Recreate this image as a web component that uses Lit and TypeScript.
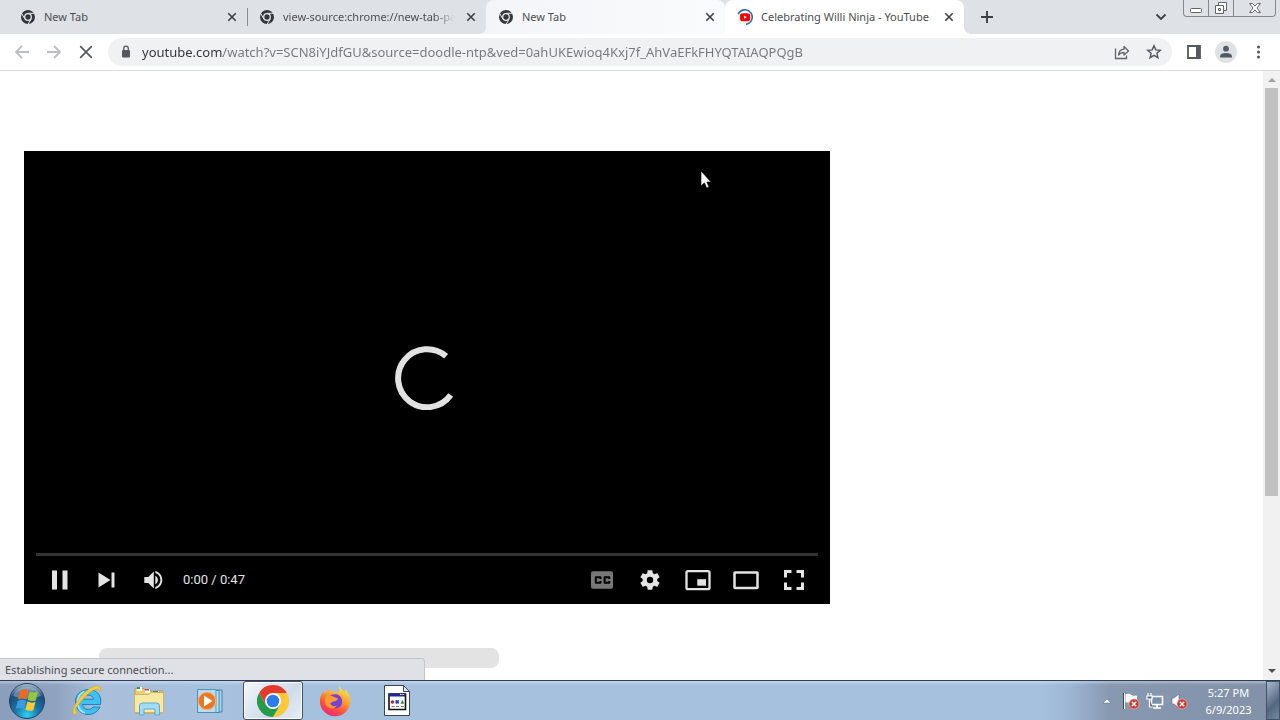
import { LitElement, html, css, svg } from "lit";
import { customElement, property } from "lit/decorators.js";
import { classMap } from "lit/directives/class-map.js";

const chromeMono = html`<svg width="16" height="16" viewBox="0 0 16 16" aria-hidden="true">
  <circle cx="8" cy="8" r="7" fill="#33373b" />
  <path d="M8 4.300h6.600M4.800 9.900L1.500 4.200M11.200 9.900L7.900 15.600" stroke="#e8eaed" stroke-width="1" />
  <circle cx="8" cy="8" r="3.300" fill="#33373b" stroke="#e8eaed" stroke-width="1.300" />
</svg>`;

const youtubeLoading = html`<svg width="16" height="16" viewBox="0 0 16 16" aria-hidden="true">
  <path d="M1.200 5.200A7.300 7.300 0 1 1 9 15.300" fill="none" stroke="#3367b4" stroke-width="1.600" />
  <rect x="3" y="4.200" width="10.200" height="8" rx="2.800" fill="#f00" />
  <path d="M7 6.600v3.200L9.800 8.200z" fill="#fff" />
</svg>`;

const crossIcon = html`<svg width="16" height="16" viewBox="0 0 16 16" aria-hidden="true">
  <path d="M4.300 4.300l7.400 7.400M11.700 4.300l-7.400 7.400" stroke="#3c4043" stroke-width="1.600" />
</svg>`;

@customElement("browser-tab")
class BrowserTab extends LitElement {
  @property() label = "";
  @property() kind = "plain";
  @property() icon = "chrome";

  static styles = css`
    :host {
      display: block;
      flex: 0 1 239px;
      min-width: 0;
    }
    .tab {
      position: relative;
      display: flex;
      align-items: center;
      gap: 8px;
      box-sizing: border-box;
      height: 34px;
      padding: 0 7px 0 12px;
      border-radius: 8px 8px 0 0;
      color: #4b4e52;
    }
    .near {
      background: linear-gradient(90deg, #f3f5f8, #fafbfc);
    }
    .active {
      background: #fff;
    }
    .near::before,
    .active::after {
      content: "";
      position: absolute;
      bottom: 0;
      width: 8px;
      height: 8px;
    }
    .near::before {
      right: 100%;
      background: radial-gradient(circle at 0 0, transparent 8px, #f3f5f8 8px);
    }
    .active::after {
      left: 100%;
      background: radial-gradient(circle at 100% 0, transparent 8px, #fff 8px);
    }
    .divided {
      border-radius: 0;
      background: linear-gradient(#8a8d91, #8a8d91) 0 50% / 1px 18px no-repeat;
    }
    .icon {
      flex: none;
      display: flex;
    }
    .label {
      flex: 1;
      min-width: 0;
      overflow: hidden;
      white-space: nowrap;
      font: 11px/16px "Noto Sans", "Open Sans", sans-serif;
    }
    .divided .label {
      -webkit-mask-image: linear-gradient(90deg, #000 calc(100% - 20px), transparent);
      mask-image: linear-gradient(90deg, #000 calc(100% - 20px), transparent);
    }
    button {
      flex: none;
      display: flex;
      padding: 0;
      border: 0;
      background: none;
    }
  `;

  render() {
    return html`<div class=${classMap({ tab: true, [this.kind]: true })}>
      <span class="icon">${this.icon === "youtube" ? youtubeLoading : chromeMono}</span>
      <span class="label">${this.label}</span>
      <button aria-label="Close tab">${crossIcon}</button>
    </div>`;
  }
}

@customElement("video-player")
class VideoPlayer extends LitElement {
  static styles = css`
    :host {
      display: block;
    }
    .player {
      display: grid;
      grid-template-rows: 1fr auto auto;
      box-sizing: border-box;
      aspect-ratio: 16 / 9;
      padding: 0 12px;
      background: #000;
      color: #e4e4e4;
    }
    .stage {
      display: grid;
      place-items: center;
      padding-top: 52px;
    }
    .progress {
      height: 3px;
      background: #343434;
    }
    .controls {
      display: flex;
      align-items: center;
      height: 48px;
    }
    button {
      display: grid;
      place-items: center;
      width: 48px;
      height: 48px;
      padding: 0;
      border: 0;
      background: none;
      color: inherit;
    }
    .left button {
      width: 47px;
    }
    .left,
    .right {
      display: flex;
      align-items: center;
    }
    .right {
      margin-left: auto;
    }
    .time {
      padding-left: 6px;
      font: 13px/16px Roboto, sans-serif;
    }
  `;

  private button(label: string, shape: unknown) {
    return html`<button aria-label=${label}>
      <svg width="36" height="36" viewBox="0 0 36 36" fill="currentColor" aria-hidden="true">${shape}</svg>
    </button>`;
  }

  render() {
    return html`<div class="player">
      <div class="stage">
        <svg width="64" height="64" viewBox="0 0 64 64" role="img" aria-label="Loading">
          <path d="M51.1 10.3A29 29 0 1 0 55.7 49.1" fill="none" stroke="#e2e2e2" stroke-width="6" />
        </svg>
      </div>
      <div class="progress"></div>
      <div class="controls">
        <div class="left">
          ${this.button("Pause", svg`<path d="M10 8.500h5v19h-5zM20.500 8.500h5v19h-5z" />`)}
          ${this.button("Next", svg`<path d="M9.500 10.400v15.200L21.500 18zM22.500 10.400h3v15.200h-3z" />`)}
          ${this.button("Mute", svg`<path d="M8.300 15v6h4l5.500 5.500v-17L12.300 15z" />
            <path d="M19.300 13.700v8.600c1.600-.8 2.600-2.400 2.600-4.300s-1-3.500-2.600-4.300z" />
            <path d="M19.300 9v2.100c3 .9 5.100 3.700 5.100 6.900s-2.100 6-5.100 6.900V27c4.100-1 7-4.600 7-9s-2.900-8-7-9z" />`)}
          <span class="time">0:00 / 0:47</span>
        </div>
        <div class="right">
          ${this.button("Subtitles", svg`<rect x="7" y="9.200" width="22" height="17.600" rx="2" fill="#787878" />
            <path d="M16.500 17v-1.700h-4.700v5.400h4.700V19M25.300 17v-1.700h-4.700v5.400h4.700V19" fill="none" stroke="#000" stroke-width="2" stroke-linejoin="round" />`)}
          ${this.button("Settings", svg`<path fill-rule="evenodd" d="M23.940 18.780c.03-.25.050-.51.050-.78s-.02-.52-.050-.78l1.680-1.320c.15-.12.190-.33.090-.51l-1.600-2.760c-.09-.17-.31-.24-.48-.17l-1.990.8c-.41-.32-.86-.58-1.350-.78l-.3-2.120c-.02-.19-.19-.33-.39-.33h-3.200c-.2 0-.36.140-.39.330l-.3 2.120c-.48.200-.93.470-1.350.780l-1.990-.8c-.18-.07-.39 0-.49.170l-1.600 2.760c-.1.170-.05.390.09.510l1.680 1.320c-.03.250-.050.520-.050.780s.02.520.050.780l-1.680 1.320c-.15.120-.19.330-.09.510l1.600 2.760c.09.170.31.240.48.170l1.990-.8c.41.320.86.580 1.350.780l.3 2.120c.02.190.19.330.39.330h3.200c.2 0 .36-.14.390-.33l.3-2.120c.48-.2.930-.47 1.350-.78l1.990.8c.18.070.39 0 .48-.17l1.600-2.760c.09-.17.050-.39-.09-.51zM18 20.600a2.600 2.600 0 1 1 0-5.200 2.600 2.600 0 0 1 0 5.200z" transform="translate(-3.960 -3.960) scale(1.220)" />`)}
          ${this.button("Miniplayer", svg`<rect x="6.500" y="9.200" width="23" height="18" rx="1.500" fill="none" stroke="currentColor" stroke-width="2.300" />
            <path d="M17.300 17.200h8.700v6.500h-8.700z" />`)}
          ${this.button("Theater mode", svg`<rect x="6.500" y="10.500" width="23" height="15.500" rx=".5" fill="none" stroke="currentColor" stroke-width="2.500" />`)}
          ${this.button("Full screen", svg`<path d="M9.500 15.500V9.500h6M20.500 9.500h6v6M26.500 20.500v6h-6M15.500 26.500h-6v-6" fill="none" stroke="currentColor" stroke-width="3" />`)}
        </div>
      </div>
    </div>`;
  }
}

@customElement("task-bar")
class TaskBar extends LitElement {
  static styles = css`
    :host {
      display: block;
    }
    .bar {
      display: flex;
      align-items: stretch;
      height: 39px;
      border-top: 1px solid #2c3d5c;
      background:
        linear-gradient(rgba(255, 255, 255, 0.35), rgba(255, 255, 255, 0) 4px),
        linear-gradient(90deg, #8b9ebb 0, #8fa3c0 56px, #a9bfdc 100px, #a6c1de 250px, rgba(166, 193, 222, 0) 340px),
        linear-gradient(270deg, #8291a8 0, #8798b1 170px, #9db6d4 210px, #a6c1de 240px);
    }
    button {
      display: grid;
      place-items: center;
      box-sizing: border-box;
      padding: 0;
      border: 0;
      background: none;
      color: #fff;
      font: 11px/17px "Noto Sans", "Open Sans", sans-serif;
    }
    .start {
      width: 54px;
    }
    .apps {
      display: flex;
      gap: 2px;
      padding-left: 3px;
    }
    .apps button {
      width: 60px;
    }
    .apps .open {
      border: 1px solid #42516b;
      border-radius: 3px;
      background: linear-gradient(135deg, #f4f7fb, #cfdbea 60%, #e6eef6);
      box-shadow: inset 0 0 0 1px #fff;
    }
    .tray {
      display: flex;
      align-items: center;
      margin-left: auto;
    }
    .tray button {
      width: 24px;
      height: 39px;
    }
    .tray .clock {
      width: 75px;
      align-content: center;
    }
    .tray .desktop {
      width: 14px;
      border: 1px solid #41516b;
      background: linear-gradient(135deg, #a9b9cd, #53677f 60%, #74879d);
    }
  `;

  render() {
    return html`<footer class="bar">
      <button class="start" aria-label="Start">
        <svg width="38" height="38" viewBox="0 0 38 38">
          <defs>
            <radialGradient id="orb" cx=".5" cy=".9" r=".9">
              <stop offset="0" stop-color="#2fd0ef" /><stop offset=".4" stop-color="#1873a8" />
              <stop offset=".75" stop-color="#1d4c77" /><stop offset="1" stop-color="#b3c8d8" />
            </radialGradient>
          </defs>
          <circle cx="19" cy="19" r="17.500" fill="url(#orb)" stroke="#24405f" />
          <path d="M5 14a15 15 0 0 1 28 0q-14 5-28 0z" fill="#fff" opacity=".3" />
          <path d="M12.500 8.500q4.500-2.500 8 0l-2 9q-4-2.300-8.500.3z" fill="#ee6a24" />
          <path d="M21.700 9.200q4 2.300 8.300.2l-2.200 9q-4.300 1.600-8-.6z" fill="#93c83d" />
          <path d="M9.700 19.200q4.300-2.500 8.500-.3l-2.200 8.300q-4-2.200-8.300-.2z" fill="#3b9ae0" />
          <path d="M19.500 19.500q3.700 2 8 .5l-2.200 8.200q-4 1.600-8-.6z" fill="#fccb2b" />
        </svg>
      </button>
      <nav class="apps">
        <button aria-label="Internet Explorer">
          <svg width="32" height="34" viewBox="0 0 32 34">
            <path d="M29.500 20.500H11.500c.5 5.500 8 6.500 10.500 2.500h7C24 34.500 5 32.500 4.500 18S26 1 29.500 14c.4 1.700.3 4.500 0 6.500zM11.500 15.200h11c-.5-5.500-10.200-5.500-11 0z" fill="#3fc0ee" stroke="#1b83bd" />
            <path d="M13 7.500Q7.500 10 6.500 17M7 21q1 6 7 8" fill="none" stroke="#a8e7fb" stroke-width="1.700" />
            <path d="M2.500 30.500C-1 23.500 14 4 25 2c5-.4 5.500 3 4 6-.500-6.500-9.500-1.500-16 6S2 26 6 28.500c-1 1.400-2 2-3.500 2z" fill="#f7cc3a" stroke="#d9a01a" stroke-width=".5" />
          </svg>
        </button>
        <button aria-label="File Explorer">
          <svg width="34" height="34" viewBox="0 0 34 34">
            <path d="M3 4.500h9l2 2.500h17v22H3z" fill="#e9cf76" stroke="#ba9c48" />
            <path d="M5 3h5v4H5zM13 5h5v4h-5zM21 7h6v3h-6z" fill="#fff" />
            <path d="M5 3h3v2H5z" fill="#30a14a" /><path d="M13 5h4v1.500h-4z" fill="#d44734" /><path d="M21 7h5v1.500h-5z" fill="#3789cc" />
            <path d="M2.500 10.500H17l2-2h12.500v20h-29z" fill="#f8e9a1" stroke="#cfb561" />
            <path d="M7.500 31V22q0-3 3-3h14q3 0 3 3v9H23v-6H12v6z" fill="#9fdcf6" stroke="#5fa8d2" />
          </svg>
        </button>
        <button aria-label="Media Player">
          <svg width="32" height="32" viewBox="0 0 32 32">
            <path d="M12 5h15v22H12z" fill="#a7d4eb" stroke="#4285ac" />
            <path d="M8 5.500h16v22H8z" fill="#c3e4f3" stroke="#4285ac" />
            <path d="M2.500 4.500h18.500v23H2.500z" fill="#b8dcef" stroke="#4f91b5" />
            <circle cx="12" cy="16" r="8.700" fill="#ed7621" stroke="#f8b17b" />
            <path d="M9 10.500v11l8.500-5.500z" fill="#fff" />
          </svg>
        </button>
        <button class="open" aria-label="Google Chrome">
          <svg width="32" height="32" viewBox="0 0 32 32">
            <path d="M16 16V8h13.860A16 16 0 0 1 16 32l7-12z" fill="#fcc934" />
            <path d="M16 16l7 4-7 12A16 16 0 0 1 2.140 8L9 20z" fill="#259b4b" />
            <path d="M2.140 8L9 20l7-4V8h13.860A16 16 0 0 0 2.140 8z" fill="#e33b2e" />
            <circle cx="16" cy="16" r="8" fill="#fff" /><circle cx="16" cy="16" r="6.300" fill="#2b7de9" />
          </svg>
        </button>
        <button aria-label="Firefox">
          <svg width="32" height="34" viewBox="0 0 32 34">
            <defs>
              <linearGradient id="fox" x1=".8" y1="0" x2=".3" y2="1">
                <stop offset="0" stop-color="#fff14a" /><stop offset=".4" stop-color="#ffa22d" />
                <stop offset=".75" stop-color="#ff4a40" /><stop offset="1" stop-color="#e8277e" />
              </linearGradient>
            </defs>
            <path d="M20 1.500c1 3 3 3.500 5 6.500 2-1 1-3 1-3 4 4 6 9 5 15a15.200 15.200 0 0 1-30-1c-.3-5 1-9 3.500-12L6 10l4-6 2 4q4-.8 7 1c2-2 1-5 1-7.500z" fill="url(#fox)" />
            <path d="M10 12.500c4-4 12-3 13 3.500s-4 9-8 8-6-4-5-6l5-1c0-2-2-2.500-5-4.500z" fill="#7542d7" />
            <path d="M7 12q4-2 8 1l4 1.500q-1 3-5 3l-3 2q2 4 7 2-4 5-9 1.500T7 12z" fill="#ff9a2e" />
          </svg>
        </button>
        <button aria-label="Program">
          <svg width="28" height="34" viewBox="0 0 28 34">
            <path d="M1.500 1.500h19l6 6v24h-25z" fill="#fff" stroke="#3b4656" />
            <path d="M20.500 1.500v6h6z" fill="#dbe7f5" stroke="#3b4656" />
            <path d="M6 10h16.500v15.500H6z" fill="#fff" stroke="#111" stroke-width="1.600" />
            <path d="M6 9.500h16.500v3H6z" fill="#1f2a94" /><path d="M17 10.500h1.500M19.500 10.500h1.500" stroke="#fff" />
            <circle cx="9.500" cy="18" r="1.800" fill="#a33030" /><path d="M12.700 16.300l3 3M15.700 16.300l-3 3" stroke="#2a3cc4" stroke-width="1.700" /><path d="M19.300 15.800l1.800 4h-3.600z" fill="#23845b" />
            <path d="M8.500 22.500h3M13 22.500h3M18 22.500h3" stroke="#777" />
          </svg>
        </button>
      </nav>
      <div class="tray">
        <button aria-label="Show hidden icons"><svg width="10" height="6" viewBox="0 0 10 6"><path d="M1 5l4-4 4 4z" fill="#fff" stroke="#5a6a80" stroke-width=".5" /></svg></button>
        <button aria-label="Action center">
          <svg width="18" height="18" viewBox="0 0 18 18"><path d="M2.500 1v16M4 2.500q3-1 5 .8t5.500.7v6H4z" fill="#fff" stroke="#fff" /><path d="M1.500 1v16" stroke="#3b4759" />
            <circle cx="12" cy="12" r="5" fill="#d2352f" stroke="#f0b0ac" stroke-width=".7" /><path d="M9.800 9.800l4.400 4.400M14.200 9.800l-4.400 4.400" stroke="#fff" stroke-width="1.500" /></svg>
        </button>
        <button aria-label="Network">
          <svg width="18" height="18" viewBox="0 0 18 18"><path d="M5.500 4.500h11v8h-11z" fill="#7990aa" stroke="#fff" stroke-width="1.500" /><path d="M11 13v3M7 16h8" stroke="#fff" stroke-width="1.700" /><path d="M2 1v3M5 1v3M1 4h5v3H1zM3.500 7v8h3" fill="#526277" stroke="#fff" stroke-width="1.200" /></svg>
        </button>
        <button aria-label="Volume muted">
          <svg width="18" height="18" viewBox="0 0 18 18"><path d="M2 6h2l5-4v14l-5-4H2z" fill="#fff" stroke="#5a6778" stroke-width=".6" />
            <circle cx="12" cy="12" r="5" fill="#d2352f" stroke="#f0b0ac" stroke-width=".7" /><path d="M9.800 9.800l4.400 4.400M14.200 9.800l-4.400 4.400" stroke="#fff" stroke-width="1.500" /></svg>
        </button>
        <button class="clock"><span>5:27 PM</span><span>6/9/2023</span></button>
        <button class="desktop" aria-label="Show desktop"></button>
      </div>
    </footer>`;
  }
}

@customElement("app-root")
class AppRoot extends LitElement {
  static styles = css`
    :host {
      display: flex;
      flex-direction: column;
      position: relative;
      height: 100vh;
      overflow: hidden;
      background: #fff;
      font: 11px/16px "Noto Sans", "Open Sans", sans-serif;
    }
    button {
      flex: none;
      display: grid;
      place-items: center;
      padding: 0;
      border: 0;
      background: none;
    }
    .strip {
      display: flex;
      flex: none;
      height: 34px;
      padding: 0 4px 0 8px;
      background: #dee1e6;
    }
    .tabs {
      display: flex;
      flex: 0 1 956px;
      min-width: 0;
    }
    .add {
      width: 46px;
    }
    .search {
      width: 44px;
      margin-left: auto;
    }
    .window {
      display: flex;
      height: 17px;
      box-sizing: border-box;
      border: 1px solid #85898f;
      border-top: 0;
      border-radius: 0 0 4px 4px;
    }
    .window button {
      width: 25px;
      border-right: 1px solid #85898f;
    }
    .window .quit {
      width: 41px;
      border: 0;
    }
    .toolbar {
      display: flex;
      align-items: center;
      flex: none;
      height: 36px;
      padding: 0 6px;
      border-bottom: 1px solid #dadcdf;
    }
    .toolbar button {
      width: 32px;
      height: 32px;
    }
    .omnibox {
      display: flex;
      align-items: center;
      flex: 1;
      min-width: 0;
      height: 28px;
      margin: 0 6px;
      padding: 0 2px 0 10px;
      border-radius: 14px;
      background: #f0f1f3;
    }
    .omnibox svg {
      flex: none;
    }
    .address {
      flex: 1;
      min-width: 0;
      margin: 0 0 0 8px;
      padding: 0;
      border: 0;
      outline: 0;
      font: 13px/20px "Noto Sans", "Open Sans", sans-serif;
      color: #6b6f74;
      background: linear-gradient(90deg, #303336 81px, #74777b 81px);
      -webkit-background-clip: text;
      background-clip: text;
      -webkit-text-fill-color: transparent;
    }
    .viewport {
      display: flex;
      flex: 1;
      min-height: 0;
    }
    .page {
      display: grid;
      grid-template-columns: minmax(0, 1fr) 409px;
      column-gap: 24px;
      align-content: start;
      flex: 1;
      min-width: 0;
      padding: 80px 0 0 24px;
      overflow: hidden;
    }
    .skeleton {
      width: 400px;
      height: 20px;
      margin: 44px 0 0 75px;
      border-radius: 8px;
      background: #e3e3e3;
    }
    .scroll {
      display: grid;
      grid-template-rows: 17px 1fr 17px;
      justify-items: stretch;
      width: 17px;
      background: #f1f1f1;
    }
    .track {
      padding: 0 2px;
    }
    .thumb {
      height: 71%;
      background: #c1c1c1;
    }
    .status {
      position: absolute;
      left: 0;
      bottom: 40px;
      box-sizing: border-box;
      width: 425px;
      height: 22px;
      padding: 3px 5px;
      border: solid #c3c5c9;
      border-width: 1px 1px 0 0;
      border-radius: 0 4px 0 0;
      background: #dfe1e6;
      color: #4b4e52;
    }
    .cursor {
      position: absolute;
      left: 700px;
      top: 170px;
    }
  `;

  render() {
    return html`
      <header class="strip">
        <div class="tabs">
          <browser-tab label="New Tab"></browser-tab>
          <browser-tab label="view-source:chrome://new-tab-page" kind="divided"></browser-tab>
          <browser-tab label="New Tab" kind="near"></browser-tab>
          <browser-tab label="Celebrating Willi Ninja - YouTube" kind="active" icon="youtube"></browser-tab>
        </div>
        <button class="add" aria-label="New tab">
          <svg width="14" height="14" viewBox="0 0 14 14"><path d="M7 1v12M1 7h12" stroke="#3c4043" stroke-width="1.900" /></svg>
        </button>
        <button class="search" aria-label="Search tabs">
          <svg width="12" height="8" viewBox="0 0 12 8"><path d="M1.500 1.500L6 6l4.500-4.500" fill="none" stroke="#3c4043" stroke-width="1.800" /></svg>
        </button>
        <div class="window">
          <button aria-label="Minimize"><svg width="14" height="16" viewBox="0 0 14 16"><rect x="1.500" y="8.500" width="11" height="4" rx="1" fill="#fff" stroke="#60646b" /></svg></button>
          <button aria-label="Restore"><svg width="14" height="16" viewBox="0 0 14 16"><path d="M4.500 2.500h8v8h-8z" fill="#fff" stroke="#60646b" /><path d="M1.500 5.500h8v8h-8z" fill="#fff" stroke="#60646b" /><path d="M4.500 8.500h2v2h-2z" fill="none" stroke="#60646b" /></svg></button>
          <button class="quit" aria-label="Close"><svg width="14" height="16" viewBox="0 0 14 16"><path d="M1.500 3.500h3L7 6l2.500-2.500h3L9 8l3.500 4.500h-3L7 10l-2.500 2.500h-3L5 8z" fill="#fff" stroke="#60646b" /></svg></button>
        </div>
      </header>
      <nav class="toolbar">
        <button aria-label="Back"><svg width="16" height="16" viewBox="0 0 16 16"><path d="M15 8H2.500M8 2L2 8l6 6" fill="none" stroke="#bcbec1" stroke-width="1.800" /></svg></button>
        <button aria-label="Forward"><svg width="16" height="16" viewBox="0 0 16 16"><path d="M1 8h12.500M8 2l6 6-6 6" fill="none" stroke="#bcbec1" stroke-width="1.800" /></svg></button>
        <button aria-label="Stop"><svg width="16" height="16" viewBox="0 0 16 16"><path d="M2.200 2.200l11.600 11.600M13.800 2.200L2.200 13.800" stroke="#55585c" stroke-width="1.700" /></svg></button>
        <div class="omnibox">
          <svg width="16" height="16" viewBox="0 0 16 16"><rect x="4" y="6" width="8" height="7.500" rx="1" fill="#55595e" /><path d="M5.700 6.500V4.500a2.300 2.300 0 0 1 4.600 0v2" fill="none" stroke="#55595e" stroke-width="1.300" /></svg>
          <input class="address" aria-label="Address" spellcheck="false" value="youtube.com/watch?v=SCN8iYJdfGU&amp;source=doodle-ntp&amp;ved=0ahUKEwioq4Kxj7f_AhVaEFkFHYQTAIAQPQgB" />
          <button aria-label="Share"><svg width="16" height="16" viewBox="0 0 16 16"><path d="M1.500 4.500v10h11v-3" fill="none" stroke="#606469" stroke-width="1.300" /><path d="M4.500 11Q5 5.500 10 5.200V2.500L14.500 7 10 11V8.500Q6.500 8.300 4.500 11z" fill="none" stroke="#606469" stroke-width="1.300" stroke-linejoin="round" /></svg></button>
          <button aria-label="Bookmark"><svg width="16" height="16" viewBox="0 0 16 16"><path d="M8 1.800l1.800 4.100 4.500.4-3.400 3 1 4.400L8 11.400l-3.900 2.300 1-4.400-3.400-3 4.500-.4z" fill="none" stroke="#55595e" stroke-width="1.500" /></svg></button>
        </div>
        <button aria-label="Side panel"><svg width="16" height="16" viewBox="0 0 16 16"><path d="M2 2h12v12H2z" fill="none" stroke="#55595e" stroke-width="1.800" /><path d="M10 2h4v12h-4z" fill="#55595e" /></svg></button>
        <button aria-label="Profile"><svg width="22" height="22" viewBox="0 0 22 22"><circle cx="11" cy="11" r="11" fill="#dfe1e4" /><circle cx="11" cy="7.700" r="2.900" fill="#505b62" /><path d="M5 16.500v-1.200Q5.500 12 11 12t6 3.300v1.200z" fill="#505b62" /></svg></button>
        <button aria-label="Menu"><svg width="16" height="16" viewBox="0 0 16 16" fill="#505459"><circle cx="8.500" cy="3" r="1.500" /><circle cx="8.500" cy="8" r="1.500" /><circle cx="8.500" cy="13" r="1.500" /></svg></button>
      </nav>
      <div class="viewport">
        <main class="page">
          <section>
            <video-player></video-player>
            <div class="skeleton"></div>
          </section>
        </main>
        <div class="scroll">
          <button aria-label="Scroll up"><svg width="8" height="5" viewBox="0 0 8 5"><path d="M0 5l4-4 4 4z" fill="#a0a0a0" /></svg></button>
          <div class="track"><div class="thumb"></div></div>
          <button aria-label="Scroll down"><svg width="8" height="5" viewBox="0 0 8 5"><path d="M0 0l4 4 4-4z" fill="#505050" /></svg></button>
        </div>
      </div>
      <task-bar></task-bar>
      <div class="status">Establishing secure connection...</div>
      <svg class="cursor" width="12" height="19" viewBox="0 0 12 19" aria-hidden="true"><path d="M1 1v15l3.400-3.200 2.300 5.200 2.300-1-2.200-5H11z" fill="#fff" stroke="#000" stroke-width=".6" /></svg>
    `;
  }
}
